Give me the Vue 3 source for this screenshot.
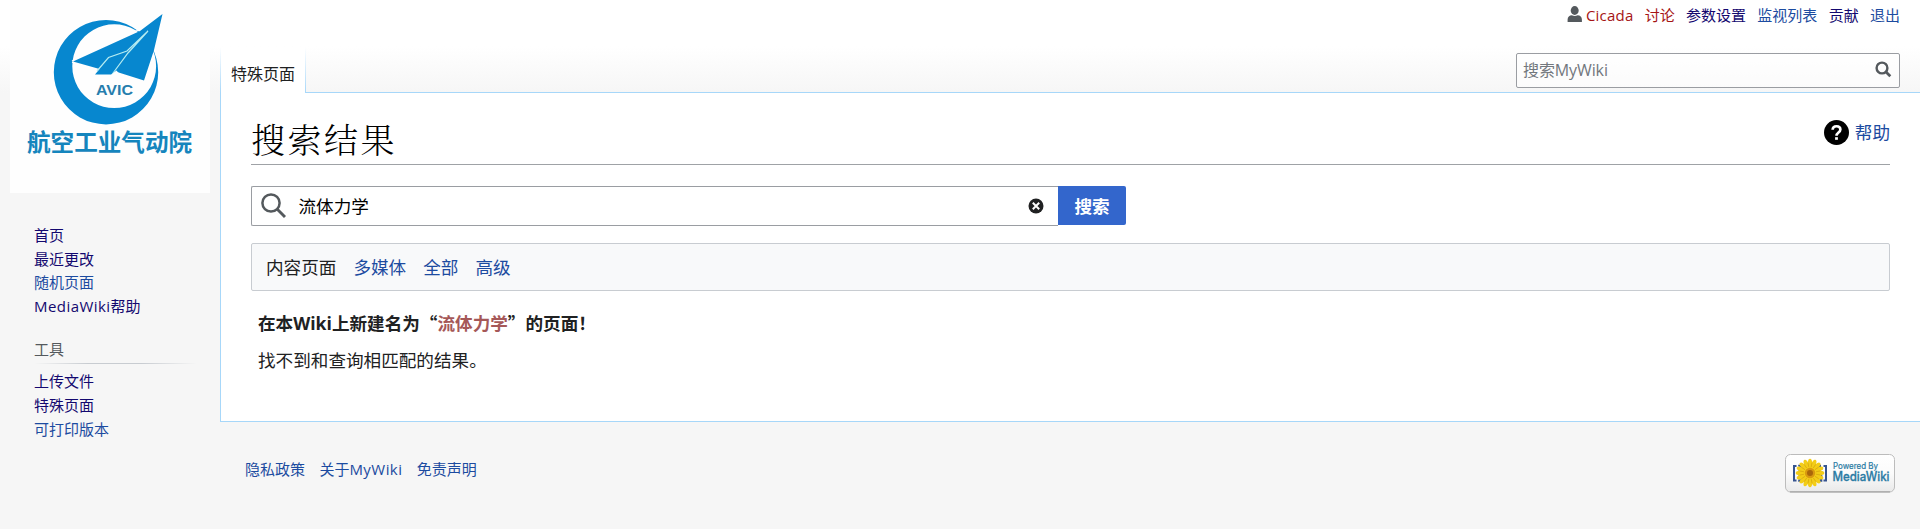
<script setup>
const personal = [
  { text: '讨论', tone: 'red' },
  { text: '参数设置', tone: 'visited' },
  { text: '监视列表', tone: 'link' },
  { text: '贡献', tone: 'visited' },
  { text: '退出', tone: 'link' },
]
const nav = [
  { text: '首页', tone: 'visited' },
  { text: '最近更改', tone: 'visited' },
  { text: '随机页面', tone: 'link' },
]
const tools = [
  { text: '上传文件', tone: 'visited' },
  { text: '特殊页面', tone: 'visited' },
  { text: '可打印版本', tone: 'link' },
]
const profiles = ['多媒体', '全部', '高级']
const petals = Array.from({ length: 16 }, (_, i) => i * 22.5)
</script>

<template>
  <div class="page">
    <aside class="sidebar">
      <a class="logo">
        <svg width="200" height="130" viewBox="0 0 200 130">
          <path fill="#0787cf" fill-rule="evenodd" d="M96 20a52.200 52.200 0 1 0 .01 0zM104.200 24.300a41.900 41.900 0 1 1-.01 0z" />
          <path fill="none" stroke="#fefefe" stroke-width="1.200" d="M114 36L132 28.500M62 61L80 52.500M62 62.200L76 66.500" />
          <path fill="#0787cf" d="M63 61.500L96 46.500L130 31L152.500 14L144 50L134 80.500L105.500 71.500L101 74.500H85L89.500 69Z" />
          <path fill="none" stroke="#b5ecf1" stroke-width="1.200" d="M87 71L98.500 57.500L117 51L138 31L118 53L102 74.500" />
          <path fill="#fefefe" d="M101.500 75L106.500 70.500L109 73.500L105 76Z" />
          <text x="104.500" y="95.300" text-anchor="middle" textLength="37" lengthAdjust="spacingAndGlyphs" class="avic">AVIC</text>
        </svg>
        <span class="logo-name">航空工业气动院</span>
      </a>
      <nav class="menu">
        <a v-for="n in nav" :key="n.text" :class="n.tone">{{ n.text }}</a>
        <a class="visited"><span class="wide">MediaWiki</span>帮助</a>
      </nav>
      <h3 class="tools-title">工具</h3>
      <nav class="menu tools">
        <a v-for="n in tools" :key="n.text" :class="n.tone">{{ n.text }}</a>
      </nav>
    </aside>

    <div class="main">
      <header class="head">
        <div class="personal">
          <svg class="user" width="16" height="17" viewBox="0 0 16 17" fill="#54595d">
            <ellipse cx="7.700" cy="4.500" rx="4" ry="4.400" />
            <path d="M.6 16v-2.500C.6 11 2.500 9.300 4.800 9.300q3 1.500 5.800 0c2.600 0 4.300 1.700 4.300 4.200V16z" />
          </svg>
          <a class="red cicada">Cicada</a>
          <a v-for="p in personal" :key="p.text" :class="p.tone">{{ p.text }}</a>
        </div>
        <div class="tabs-row">
          <div class="tab">特殊页面</div>
          <div class="mini-search">
            <span>搜索MyWiki</span>
            <svg width="17" height="17" viewBox="0 0 17 17" fill="none" stroke="#54595d">
              <circle cx="7" cy="7" r="5.400" stroke-width="2.400" />
              <path d="M10.800 10.800L15.300 15.300" stroke-width="2.700" />
            </svg>
          </div>
        </div>
      </header>

      <main class="content">
        <div class="title-row">
          <h1>搜索结果</h1>
          <a class="help link">
            <svg width="25" height="25" viewBox="0 0 25 25">
              <circle cx="12.500" cy="12.500" r="12.500" />
              <path fill="none" stroke="#fff" stroke-width="2.600" d="M8.600 9.700C8.700 7.300 10.300 6.200 12.500 6.200c2.400 0 3.900 1.300 3.900 3.200 0 3-3.900 3.100-3.900 6.300" />
              <path fill="#fff" d="M11.100 17.200h2.800v2.600h-2.800z" />
            </svg>
            帮助
          </a>
        </div>
        <div class="search">
          <div class="field">
            <svg width="26" height="26" viewBox="0 0 26 26" fill="none" stroke="#54595d">
              <circle cx="10" cy="10" r="8.600" stroke-width="2.500" />
              <path d="M15.800 15.800L24 24" stroke-width="2.900" />
            </svg>
            <span>流体力学</span>
            <svg class="clear" width="16" height="16" viewBox="0 0 16 16">
              <circle cx="8" cy="8" r="7.500" fill="#202122" />
              <path d="M4.800 4.800l6.400 6.400M11.200 4.800l-6.400 6.400" stroke="#fff" stroke-width="2" />
            </svg>
          </div>
          <button class="go">搜索</button>
        </div>
        <div class="profiles">
          <span>内容页面</span>
          <a v-for="p in profiles" :key="p" class="link">{{ p }}</a>
        </div>
        <p class="create">在本<span class="wiki">Wiki</span>上新建名为<span class="cjk">“</span><a class="new">流体力学</a><span class="cjk">”的页面！</span></p>
        <p class="none">找不到和查询相匹配的结果。</p>
      </main>

      <footer class="foot">
        <div class="foot-links">
          <a class="link">隐私政策</a>
          <a class="link">关于<span class="wide">MyWiki</span></a>
          <a class="link">免责声明</a>
        </div>
        <svg class="badge" width="110" height="39" viewBox="0 0 110 39">
          <defs>
            <linearGradient id="badge-fill" x1="0" y1="0" x2="0" y2="1">
              <stop offset="0" stop-color="#fff" />
              <stop offset=".5" stop-color="#fbfbfb" />
              <stop offset="1" stop-color="#e9e9e9" />
            </linearGradient>
          </defs>
          <rect x=".5" y=".5" width="109" height="37.500" rx="5" fill="url(#badge-fill)" stroke="#bcbcbc" />
          <path d="M5 37.900H105" stroke="#999" />
          <g fill="none" stroke="#36548f" stroke-width="2">
            <path d="M11.500 12H9v14.500h2.500M38.500 12H41v14.500h-2.500" />
            <path d="M17 12h-2.500v14.500H17M33 12h3v14.500h-3" stroke-width="2.600" stroke-dasharray="3 1" />
          </g>
          <g fill="#f3cd18">
            <ellipse v-for="a in petals" :key="a" cx="25" cy="9.500" rx="2.200" ry="4.800" :transform="`rotate(${a} 25 19)`" />
            <circle cx="25" cy="19" r="9" />
          </g>
          <g stroke="#d5a50d" stroke-width=".7">
            <path v-for="a in petals" :key="a" d="M25 8.500V13" :transform="`rotate(${a + 11} 25 19)`" />
          </g>
          <circle cx="25" cy="19" r="5.200" fill="#d99a10" />
          <circle cx="25" cy="19" r="3" fill="#a9660b" />
          <text x="48" y="14.500" textLength="45" lengthAdjust="spacingAndGlyphs" class="b1">Powered By</text>
          <text x="47.500" y="27" textLength="57" lengthAdjust="spacingAndGlyphs" class="b2">MediaWiki</text>
        </svg>
      </footer>
    </div>
  </div>
</template>

<style>
body {
  margin: 0;
  overflow: hidden;
}
</style>

<style scoped>
* {
  box-sizing: border-box;
}
.page {
  width: 1920px;
  height: 529px;
  display: flex;
  background: linear-gradient(#fff 46px, #f6f6f6 93px);
  font: 15px/24px "Open Sans", "Noto Sans CJK SC", sans-serif;
  color: #202122;
}
.link { color: #1c4ba0; }
.visited { color: #13086f; }
.red { color: #a51414; }
.wide { letter-spacing: 0.450px; }

.sidebar {
  width: 220px;
  flex: none;
}
.logo {
  display: flex;
  flex-direction: column;
  width: 200px;
  height: 193px;
  margin-left: 10px;
  background: #fefefe;
}
.avic {
  font: 700 14px "Liberation Sans", sans-serif;
  fill: #267dad;
}
.logo-name {
  font: 700 23.600px/22px "Noto Sans CJK SC", sans-serif;
  color: #1585bd;
  margin-left: 17px;
  white-space: nowrap;
}
.menu {
  display: flex;
  flex-direction: column;
  padding: 31px 0 0 34px;
  line-height: 23.600px;
}
.tools-title {
  margin: 18px 23px 0 34px;
  height: 28px;
  font: 15px/26px "Noto Sans CJK SC", sans-serif;
  color: #54595d;
  background: linear-gradient(to right, rgba(200, 204, 209, 0), #c8ccd1 33%, #c8ccd1 66%, rgba(200, 204, 209, 0)) bottom / 100% 1px no-repeat;
}
.tools {
  padding-top: 6px;
}

.main {
  flex: 1;
  min-width: 0;
}
.head {
  height: 93px;
}
.personal {
  display: flex;
  justify-content: flex-end;
  gap: 11.300px;
  height: 47px;
  padding: 3px 20px 0 0;
}
.user {
  margin: 3px -8.300px 0 0;
}
.cicada {
  letter-spacing: 0.200px;
}
.tabs-row {
  display: flex;
  justify-content: space-between;
  height: 46px;
  background: linear-gradient(#a7d7f9, #a7d7f9) 86px bottom / 100% 1px no-repeat;
}
.tab {
  width: 86px;
  height: 46px;
  padding-left: 11px;
  background: linear-gradient(#fff, #a7d7f9) left / 1px 100% no-repeat, linear-gradient(#fff, #a7d7f9) right / 1px 100% no-repeat, #fff;
  font-size: 16px;
  line-height: 54px;
}
.mini-search {
  display: flex;
  justify-content: space-between;
  align-items: center;
  width: 384px;
  height: 35px;
  margin: 6px 20px 0 0;
  padding: 0 7px 2px 6px;
  border: 1px solid #9a9da2;
  border-radius: 2px;
  background: rgba(255, 255, 255, 0.5);
  font-size: 16px;
  letter-spacing: -0.100px;
  color: #72777d;
}
.content {
  height: 329px;
  padding: 23px 30px 0;
  border-left: 1px solid #a7d7f9;
  border-bottom: 1px solid #a7d7f9;
  background: #fff;
  font-size: 17.600px;
}
.title-row {
  display: flex;
  justify-content: space-between;
  height: 49px;
  border-bottom: 1px solid #9fa2a6;
}
h1 {
  margin: 0;
  font: 300 34px/46px "Noto Serif CJK SC", "Noto Sans CJK SC", serif;
  letter-spacing: 2.500px;
  color: #000;
}
.help {
  display: flex;
  gap: 6px;
  margin-top: 4px;
  line-height: 25px;
}
.search {
  display: flex;
  margin-top: 21px;
  height: 40px;
}
.field {
  display: flex;
  align-items: center;
  width: 807px;
  padding: 0 14px 0 9px;
  border: 1px solid #9a9da2;
  border-right: 0;
  border-radius: 2px 0 0 2px;
  color: #000;
}
.field span {
  margin-left: 11.500px;
}
.clear {
  margin-left: auto;
}
.go {
  width: 68px;
  height: 39px;
  padding: 0;
  border: 0;
  border-radius: 0 2px 2px 0;
  background: #36c;
  color: #fff;
  font: 700 17.600px/38px "Noto Sans CJK SC", sans-serif;
}
.profiles {
  display: flex;
  gap: 17px;
  height: 48px;
  margin-top: 17px;
  padding-left: 14px;
  border: 1px solid #c8ccd1;
  border-radius: 2px;
  background: #f8f9fa;
  line-height: 46px;
}
.create,
.none {
  margin: 0 0 0 7px;
}
.create {
  margin-top: 20px;
  font-weight: 700;
}
.none {
  margin-top: 13px;
}
.cjk {
  font-family: "Noto Sans CJK SC", sans-serif;
}
.new {
  color: #a55858;
}
.foot {
  display: flex;
  justify-content: space-between;
  padding: 32px 25px 0 25px;
}
.foot-links {
  display: flex;
  gap: 14.400px;
  padding-top: 3px;
}
.b1 {
  font: 8.500px "Inter", sans-serif;
  fill: #2a7ba4;
  stroke: #2a7ba4;
  stroke-width: 0.200px;
}
.b2 {
  font: 500 12.500px "Inter", sans-serif;
  fill: #2a7ba4;
  stroke: #2a7ba4;
  stroke-width: 0.300px;
}
</style>
